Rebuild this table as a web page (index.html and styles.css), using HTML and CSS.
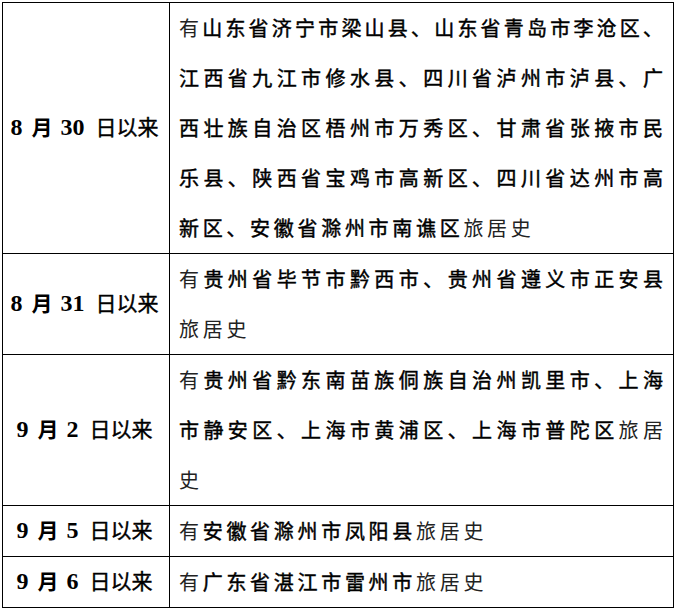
FILE: index.html
```html
<!DOCTYPE html>
<html lang="zh-CN">
<head>
<meta charset="utf-8">
<link rel="stylesheet" href="styles.css">
</head>
<body>
<table class="tbl">
  <tr>
    <td class="date"><b class="num">8</b><b class="cj">月</b><b class="num">30</b><span class="cj2">日以来</span></td>
    <td class="place">
      <div class="ln"><span class="lt">有</span>山东省济宁市梁山县、山东省青岛市李沧区、</div>
      <div class="ln">江西省九江市修水县、四川省泸州市泸县、广</div>
      <div class="ln">西壮族自治区梧州市万秀区、甘肃省张掖市民</div>
      <div class="ln">乐县、陕西省宝鸡市高新区、四川省达州市高</div>
      <div class="ln last">新区、安徽省滁州市南谯区<span class="lt">旅居史</span></div>
    </td>
  </tr>
  <tr>
    <td class="date"><b class="num">8</b><b class="cj">月</b><b class="num">31</b><span class="cj2">日以来</span></td>
    <td class="place">
      <div class="ln"><span class="lt">有</span>贵州省毕节市黔西市、贵州省遵义市正安县</div>
      <div class="ln last"><span class="lt">旅居史</span></div>
    </td>
  </tr>
  <tr>
    <td class="date"><b class="num">9</b><b class="cj">月</b><b class="num">2</b><span class="cj2">日以来</span></td>
    <td class="place">
      <div class="ln"><span class="lt">有</span>贵州省黔东南苗族侗族自治州凯里市、上海</div>
      <div class="ln">市静安区、上海市黄浦区、上海市普陀区<span class="lt">旅居</span></div>
      <div class="ln last"><span class="lt">史</span></div>
    </td>
  </tr>
  <tr>
    <td class="date"><b class="num">9</b><b class="cj">月</b><b class="num">5</b><span class="cj2">日以来</span></td>
    <td class="place">
      <div class="ln last"><span class="lt">有</span>安徽省滁州市凤阳县<span class="lt">旅居史</span></div>
    </td>
  </tr>
  <tr>
    <td class="date"><b class="num">9</b><b class="cj">月</b><b class="num">6</b><span class="cj2">日以来</span></td>
    <td class="place">
      <div class="ln last"><span class="lt">有</span>广东省湛江市雷州市<span class="lt">旅居史</span></div>
    </td>
  </tr>
</table>
</body>
</html>
```

FILE: styles.css
```css
html, body {
  margin: 0;
  padding: 0;
  background: #ffffff;
}
body {
  font-family: "Noto Sans CJK SC", "Liberation Serif", sans-serif;
  color: #000;
}
.tbl {
  margin: 2px 0 0 2px;
  border-collapse: collapse;
  width: 672px;
  table-layout: fixed;
}
.tbl td {
  border: 1px solid #000;
  padding: 0;
}
.date {
  width: 163px;
  text-align: center;
  vertical-align: middle;
  white-space: nowrap;
  font-size: 21px;
  line-height: 40px;
  padding: 0 3px 5px 0 !important;
}
.num {
  font-family: "Liberation Serif", serif;
  font-weight: bold;
  font-size: 24px;
  line-height: 1;
}
.cj {
  font-weight: bold;
  margin: 0 8px 0 9px;
}
.cj2 {
  font-weight: normal;
  -webkit-text-stroke: 0.4px #000;
  margin-left: 11px;
}
.place {
  padding: 0 10px 0 9px !important;
  vertical-align: top;
}
.ln {
  font-size: 20px;
  line-height: 50px;
  height: 50px;
  font-weight: normal;
  -webkit-text-stroke: 0.45px #000;
  text-align: justify;
  text-align-last: justify;
  white-space: nowrap;
}
.ln.last {
  text-align: left;
  text-align-last: left;
  letter-spacing: 3.7px;
}
.lt {
  font-weight: normal;
  color: #222;
  -webkit-text-stroke: 0;
}
```
